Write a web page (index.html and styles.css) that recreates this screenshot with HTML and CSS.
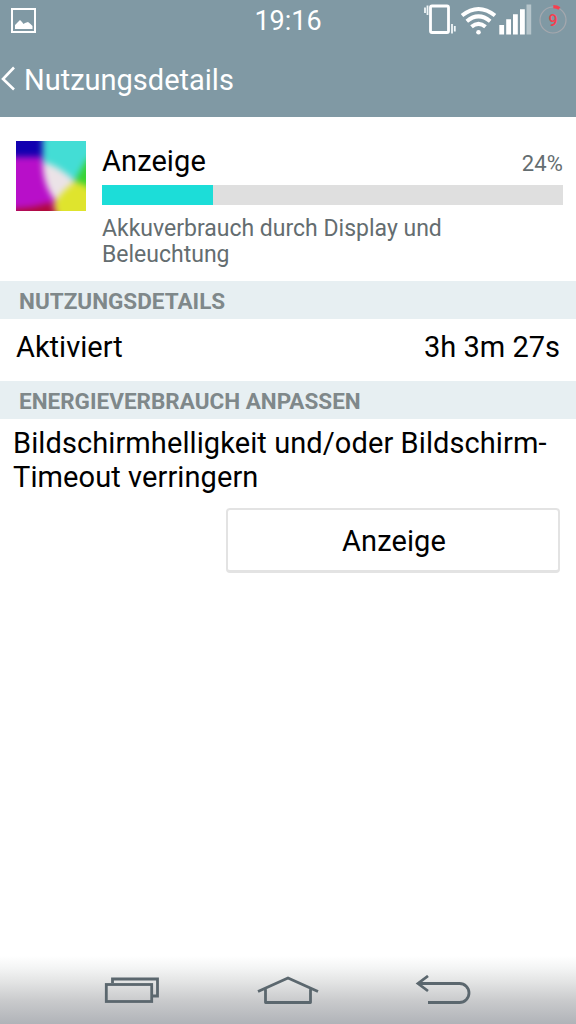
FILE: index.html
```html
<!DOCTYPE html>
<html lang="de">
<head>
    <meta charset="utf-8">
    <title>Nutzungsdetails</title>
    <meta name="viewport" content="width=device-width, initial-scale=1">
    <link rel="stylesheet" href="styles.css">
</head>
<body>
    <header class="top">
        <div class="status">
            <svg class="status-photo" width="26" height="26" viewBox="0 0 26 26">
                <rect x="1" y="2" width="23" height="23" fill="none" stroke="#fff" stroke-width="2"/>
                <path d="M4 22V18L7 15L9 13L11 15L12.5 17L14 16L17 15L19.5 17L21.5 19V22Z" fill="#fff"/>
            </svg>
            <span class="clock">19:16</span>
            <div class="status-icons">
                <svg width="152" height="40" viewBox="424 0 152 40">
                    <!-- vibrate -->
                    <rect x="430.5" y="6" width="18" height="26.5" rx="1.5" fill="none" stroke="#fff" stroke-width="2.8"/>
                    <path d="M427.500 5.500V15M425 7.500V13M452 24V33.500M454.800 26V31.500" stroke="#f0f6f8" stroke-width="1.800"/>
                    <!-- wifi -->
                    <g fill="none" stroke="#fff" stroke-width="4">
                        <path d="M462 15.500Q478.500 2.500 495 15.500"/>
                        <path d="M466.800 21.200Q478.500 11.600 490.200 21.200"/>
                        <path d="M471.500 26.800Q478.500 20.800 485.500 26.800"/>
                    </g>
                    <circle cx="478.500" cy="32.200" r="2.300" fill="#fff"/>
                    <!-- signal -->
                    <path d="M499.300 25h4.800v9.500h-4.800zM506.200 19.300h4.800v15.200h-4.800zM513 14.300h4.800v20.200h-4.800zM520 9.300h4.800v25.200h-4.800z" fill="#fff"/>
                    <path d="M526.500 4.500h4.700v30h-4.700z" fill="#b6c5cb"/>
                    <!-- battery -->
                    <circle cx="553" cy="20" r="13" fill="none" stroke="#a5a8ae" stroke-width="1.200"/>
                    <path d="M553.300 6.700Q557 6.700 559.500 8.500" fill="none" stroke="#f5404f" stroke-width="3.200"/>
                    <text class="battery" x="553" y="25.500" text-anchor="middle">9</text>
                </svg>
            </div>
        </div>
        <div class="title-bar">
            <svg width="16" height="26" viewBox="0 0 16 26">
                <path d="M14 1.500L3 13L14 23.500" fill="none" stroke="#fff" stroke-width="2.600"/>
            </svg>
            <h1>Nutzungsdetails</h1>
        </div>
    </header>

    <section class="usage">
        <svg class="usage-icon" width="70" height="70" viewBox="0 0 71 71">
            <defs>
                <filter id="soft" x="-20%" y="-20%" width="140%" height="140%" color-interpolation-filters="sRGB">
                    <feGaussianBlur stdDeviation="3"/>
                </filter>
            </defs>
            <g filter="url(#soft)">
                <rect x="-10" y="-10" width="91" height="91" fill="#b80fc9"/>
                <rect x="-10" y="-10" width="38" height="26" fill="#1200b0"/>
                <path d="M27 -10H81V26L61 41L44 30L27 23Z" fill="#43ddd5"/>
                <path d="M71 20L81 10V60L68 48L60 40Z" fill="#38d332"/>
                <path d="M27 21Q46 26 61 42Q50 50 41 62Q27 46 27 21Z" fill="#ebe3e7"/>
                <path d="M60 41L71 45L81 55V81H43L38 64Q47 50 60 41Z" fill="#dfe42d"/>
                <path d="M-10 69Q20 68 35 62L43 81H-10Z" fill="#b00a38"/>
            </g>
        </svg>
        <div class="usage-info">
            <div class="usage-head">
                <span class="name">Anzeige</span>
                <span class="percent">24%</span>
            </div>
            <div class="bar"><div class="bar-fill" style="width: 24%"></div></div>
            <p class="description">Akkuverbrauch durch Display und<br>Beleuchtung</p>
        </div>
    </section>

    <h2 class="section-title">NUTZUNGSDETAILS</h2>
    <div class="row">
        <span class="row-label">Aktiviert</span>
        <span class="row-value">3h 3m 27s</span>
    </div>

    <h2 class="section-title">ENERGIEVERBRAUCH ANPASSEN</h2>
    <p class="hint">Bildschirmhelligkeit und/oder Bildschirm-<br>Timeout verringern</p>
    <button class="button" type="button">Anzeige</button>

    <nav class="nav">
        <svg width="56" height="32" viewBox="104 975 56 32">
            <path d="M112.500 983V979H157.500V996H152" fill="none" stroke="#5b676e" stroke-width="2.800"/>
            <rect x="106.300" y="984.500" width="45.400" height="17" fill="none" stroke="#5b676e" stroke-width="2.800"/>
        </svg>
        <svg width="64" height="32" viewBox="256 975 64 32">
            <path d="M258 991.500L288 978L318 991.500M265.500 989V1002.500H310.500V989" fill="none" stroke="#5b676e" stroke-width="2.800" stroke-linejoin="round"/>
        </svg>
        <svg width="56" height="32" viewBox="415 975 56 32">
            <path d="M428 976L418 983.500L428 991M418 983.500H459.500A9.500 9.500 0 0 1 459.500 1002.500H428" fill="none" stroke="#5b676e" stroke-width="2.800"/>
        </svg>
    </nav>
</body>
</html>
```
FILE: styles.css
```css
body {
    margin: 0;
    height: 1024px;
    display: flex;
    flex-direction: column;
    overflow: hidden;
    background: #fff;
    color: #000;
    font-family: Roboto, sans-serif;
    font-size: 29px;
}
svg {
    display: block;
    flex: none;
}
h1, h2, p {
    margin: 0;
    font-weight: 400;
}
.top {
    height: 117px;
    background: #8099a4;
    color: #fff;
}
.status {
    display: grid;
    grid-template-columns: 152px 1fr 152px;
    align-items: center;
    height: 40px;
}
.status-photo {
    margin-left: 11px;
}
.clock {
    padding-top: 2px;
    text-align: center;
    font-size: 27px;
    line-height: 38px;
}
.battery {
    fill: #f5404f;
    font-size: 16px;
    font-weight: 500;
}
.title-bar {
    display: flex;
    align-items: center;
    height: 77px;
    gap: 8px;
}
h1 {
    padding-top: 2px;
    font-size: 29px;
    line-height: 34px;
}
.usage {
    display: flex;
    box-sizing: border-box;
    height: 164px;
    padding: 23px 13px 0 16px;
    gap: 16px;
}
.usage-icon {
    margin-top: 1px;
    overflow: hidden;
}
.usage-info {
    flex: 1;
}
.usage-head {
    display: flex;
    justify-content: space-between;
    align-items: baseline;
    height: 45px;
    line-height: 43px;
    letter-spacing: 0.1px;
}
.percent {
    font-size: 22px;
    color: #646d70;
}
.bar {
    height: 20px;
    background: #dfdfdf;
}
.bar-fill {
    height: 100%;
    background: #1cddd8;
}
.description {
    margin-top: 11px;
    font-size: 23px;
    line-height: 26px;
    color: #646d70;
}
.section-title {
    height: 38px;
    padding-left: 19px;
    background: #e7eff2;
    color: #7f888a;
    font-size: 22.5px;
    font-weight: 700;
    line-height: 41px;
}
.row {
    display: flex;
    justify-content: space-between;
    height: 62px;
    padding: 0 16px;
    line-height: 56px;
}
.hint {
    padding: 7px 0 0 13px;
    line-height: 34px;
    letter-spacing: 0.09px;
    white-space: nowrap;
}
.button {
    align-self: flex-end;
    box-sizing: border-box;
    width: 334px;
    height: 65px;
    margin: 14px 16px 0 0;
    padding: 2px 0 0 2px;
    border: 2px solid #e3e3e3;
    border-bottom-width: 3px;
    border-radius: 4px;
    background: #fff;
    color: #000;
    font: inherit;
    letter-spacing: 0.1px;
}
.nav {
    display: grid;
    grid-template-columns: 56px 64px 56px;
    justify-content: space-between;
    align-items: start;
    box-sizing: border-box;
    height: 74px;
    margin-top: auto;
    padding: 25px 105px 0 104px;
    background: linear-gradient(#fff 8%, #f4f5f5 24%, #e4e5e5 42%, #c8c9cb 70%, #b0b3b8 100%);
}
```
